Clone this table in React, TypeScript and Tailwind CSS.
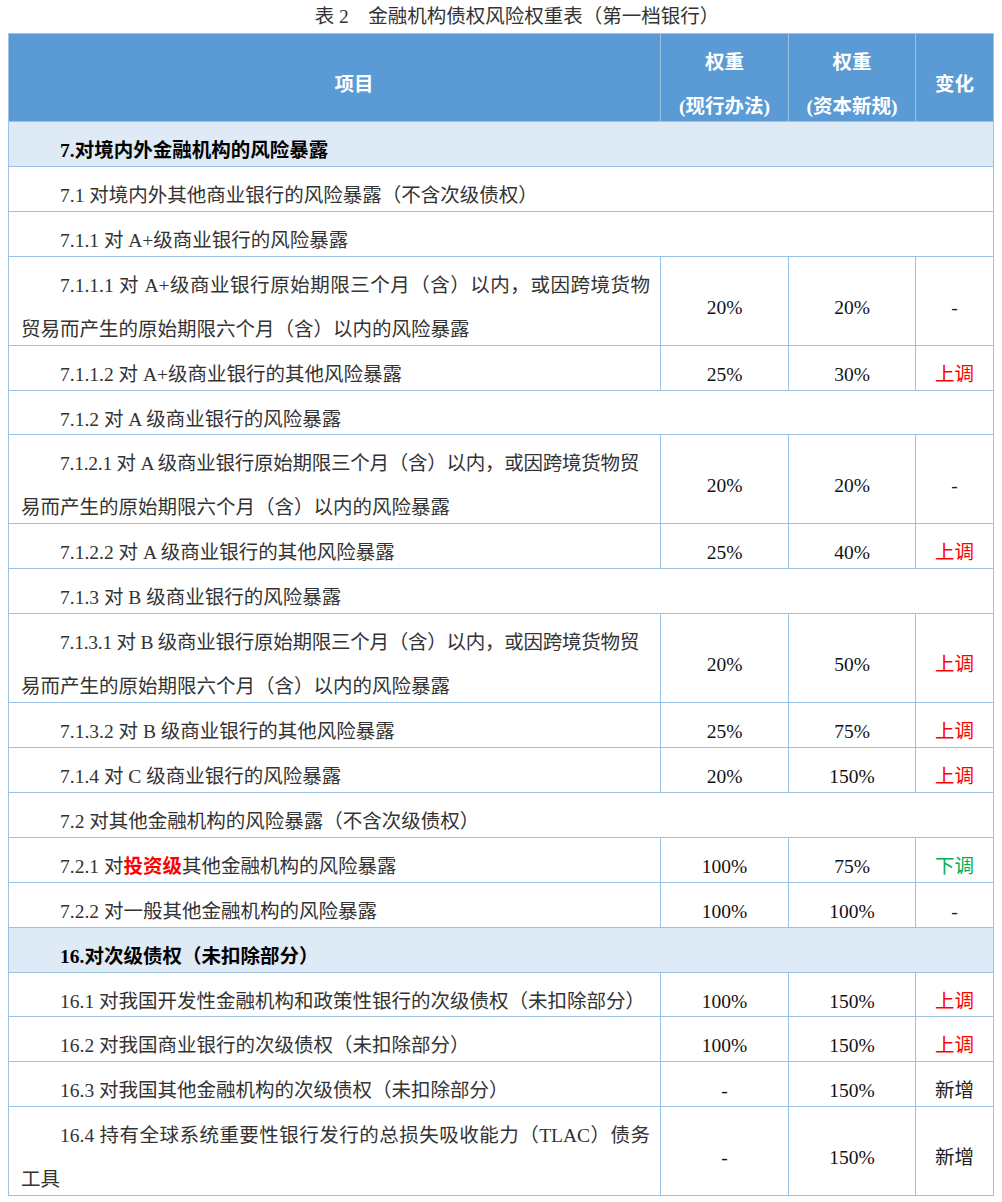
import React from "react";

type Row =
  | { kind: "section"; text: string }
  | { kind: "heading"; text: string }
  | {
      kind: "item";
      lines: React.ReactNode[];
      cur: string;
      next: string;
      change: string;
      tight?: boolean;
    };

const rows: Row[] = [
  { kind: "section", text: "7.对境内外金融机构的风险暴露" },
  { kind: "heading", text: "7.1 对境内外其他商业银行的风险暴露（不含次级债权）" },
  { kind: "heading", text: "7.1.1 对 A+级商业银行的风险暴露" },
  {
    kind: "item",
    lines: [
      "7.1.1.1 对 A+级商业银行原始期限三个月（含）以内，或因跨境货物",
      "贸易而产生的原始期限六个月（含）以内的风险暴露",
    ],
    cur: "20%",
    next: "20%",
    change: "-",
  },
  { kind: "item", lines: ["7.1.1.2 对 A+级商业银行的其他风险暴露"], cur: "25%", next: "30%", change: "上调" },
  { kind: "heading", text: "7.1.2 对 A 级商业银行的风险暴露" },
  {
    kind: "item",
    lines: [
      "7.1.2.1 对 A 级商业银行原始期限三个月（含）以内，或因跨境货物贸",
      "易而产生的原始期限六个月（含）以内的风险暴露",
    ],
    cur: "20%",
    next: "20%",
    change: "-",
    tight: true,
  },
  { kind: "item", lines: ["7.1.2.2 对 A 级商业银行的其他风险暴露"], cur: "25%", next: "40%", change: "上调" },
  { kind: "heading", text: "7.1.3 对 B 级商业银行的风险暴露" },
  {
    kind: "item",
    lines: [
      "7.1.3.1 对 B 级商业银行原始期限三个月（含）以内，或因跨境货物贸",
      "易而产生的原始期限六个月（含）以内的风险暴露",
    ],
    cur: "20%",
    next: "50%",
    change: "上调",
    tight: true,
  },
  { kind: "item", lines: ["7.1.3.2 对 B 级商业银行的其他风险暴露"], cur: "25%", next: "75%", change: "上调" },
  { kind: "item", lines: ["7.1.4 对 C 级商业银行的风险暴露"], cur: "20%", next: "150%", change: "上调" },
  { kind: "heading", text: "7.2 对其他金融机构的风险暴露（不含次级债权）" },
  {
    kind: "item",
    lines: [
      <>
        7.2.1 对<span className="font-bold text-[#ff0000]">投资级</span>其他金融机构的风险暴露
      </>,
    ],
    cur: "100%",
    next: "75%",
    change: "下调",
  },
  { kind: "item", lines: ["7.2.2 对一般其他金融机构的风险暴露"], cur: "100%", next: "100%", change: "-" },
  { kind: "section", text: "16.对次级债权（未扣除部分）" },
  {
    kind: "item",
    lines: ["16.1 对我国开发性金融机构和政策性银行的次级债权（未扣除部分）"],
    cur: "100%",
    next: "150%",
    change: "上调",
  },
  { kind: "item", lines: ["16.2 对我国商业银行的次级债权（未扣除部分）"], cur: "100%", next: "150%", change: "上调" },
  { kind: "item", lines: ["16.3 对我国其他金融机构的次级债权（未扣除部分）"], cur: "-", next: "150%", change: "新增" },
  {
    kind: "item",
    lines: ["16.4 持有全球系统重要性银行发行的总损失吸收能力（TLAC）债务", "工具"],
    cur: "-",
    next: "150%",
    change: "新增",
  },
];

const cell = "flex flex-col justify-center pt-[14px] leading-[44px] border-r border-b border-[#9cc2e5]";

const changeColor = (c: string) => {
  if (c === "上调") return "text-[#ff0000]";
  if (c === "下调") return "text-[#00b050]";
  return "text-[#222222]";
};

export default function App() {
  return (
    <div
      className="bg-white w-[1002px] h-[1202px] text-[19.5px]"
      style={{ fontFamily: '"Liberation Serif", "Noto Sans CJK SC", serif' }}
    >
      <div className="h-[33px] leading-[33px] text-center pl-[32px] text-[#333333]">
        表 2　金融机构债权风险权重表（第一档银行）
      </div>

      <div className="ml-[8px] w-[986px] border-l border-t border-[#9cc2e5] grid grid-cols-[652px_128px_127px_78px]">
        {/* header */}
        <div className={`${cell} h-[88px] bg-[#5b9bd5] border-[#8fb8e4] text-white font-bold text-center indent-[39px]`}>
          项目
        </div>
        <div className={`${cell} h-[88px] bg-[#5b9bd5] border-[#8fb8e4] text-white font-bold text-center`}>
          <span>权重</span>
          <span>(现行办法)</span>
        </div>
        <div className={`${cell} h-[88px] bg-[#5b9bd5] border-[#8fb8e4] text-white font-bold text-center`}>
          <span>权重</span>
          <span>(资本新规)</span>
        </div>
        <div className={`${cell} h-[88px] bg-[#5b9bd5] border-[#8fb8e4] text-white font-bold text-center`}>
          变化
        </div>

        {rows.map((r, i) => {
          if (r.kind === "section") {
            return (
              <div
                key={i}
                className={`${cell} col-span-4 h-[44.9px] bg-[#deeaf6] font-bold text-black pl-[12px] indent-[39px]`}
              >
                {r.text}
              </div>
            );
          }
          if (r.kind === "heading") {
            return (
              <div key={i} className={`${cell} col-span-4 h-[44.9px] text-[#333333] pl-[12px] indent-[39px]`}>
                {r.text}
              </div>
            );
          }
          const h = r.lines.length > 1 ? "h-[89px]" : "h-[44.9px]";
          return (
            <React.Fragment key={i}>
              <div className={`${cell} ${h} text-[#333333] pl-[12px] pr-[10px]`}>
                {r.lines.map((l, j) => {
                  let cls = "block";
                  if (j === 0) {
                    cls = "block indent-[39px]";
                    if (r.tight) cls += " whitespace-nowrap tracking-[-0.25px]";
                    else if (r.lines.length > 1) cls += " text-justify [text-align-last:justify]";
                  }
                  return (
                    <span key={j} className={cls}>
                      {l}
                    </span>
                  );
                })}
              </div>
              <div className={`${cell} ${h} text-center text-[#111111]`}>{r.cur}</div>
              <div className={`${cell} ${h} text-center text-[#111111]`}>{r.next}</div>
              <div className={`${cell} ${h} text-center ${changeColor(r.change)}`}>{r.change}</div>
            </React.Fragment>
          );
        })}
      </div>
    </div>
  );
}
